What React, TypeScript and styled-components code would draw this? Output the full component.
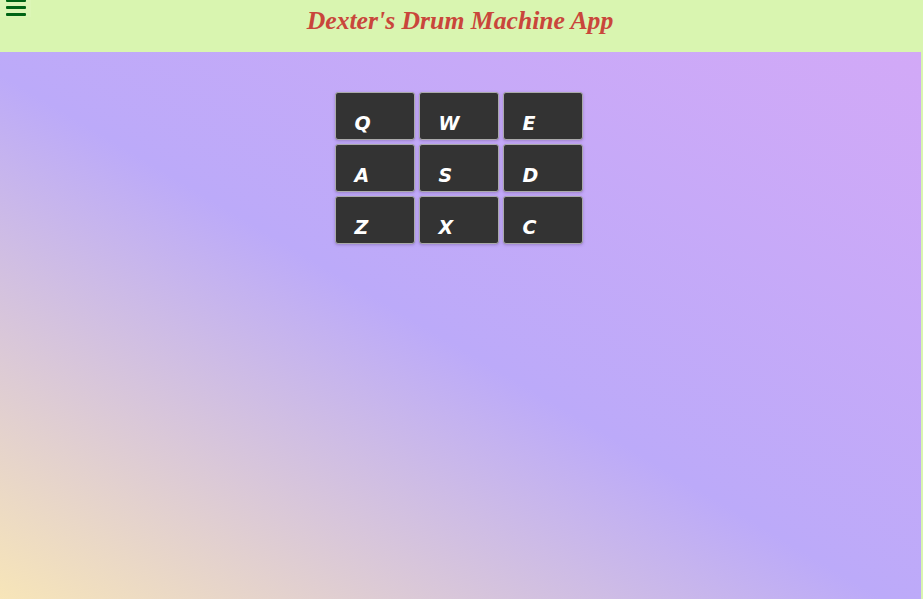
import React from "react";
import styled, { createGlobalStyle } from "styled-components";

const Global = createGlobalStyle`
  html, body { margin: 0; padding: 0; background: #d9f5b0; }
  body { font-family: "Liberation Serif", serif; overflow: hidden; }
`;

const Page = styled.div`
  display: flex;
  flex-direction: column;
  width: 923px;
  height: 599px;
`;

const Header = styled.header`
  position: relative;
  height: 52px;
  flex: none;
  display: flex;
  justify-content: center;
  background: #d9f5b0;
`;

const Menu = styled.button`
  position: absolute;
  left: 0;
  top: 0;
  width: 31px;
  height: 18px;
  padding: 0;
  border: none;
  background: #dcf6b6;
  display: flex;
  flex-direction: column;
  align-items: center;
  gap: 4px;
  margin-top: -1px;
`;

const Bar = styled.span`
  display: block;
  width: 20px;
  height: 3px;
  border-radius: 1px;
  background: #006414;
`;

const Title = styled.h1`
  margin: 0 0 0 -3px;
  padding-top: 6px;
  font-family: "Liberation Serif", serif;
  font-style: italic;
  font-weight: bold;
  font-size: 25.7px;
  color: #c9463b;
`;

const Main = styled.main`
  flex: 1;
  width: 921px;
  background: linear-gradient(to top right, #f7e5b8 0%, #bcaaf9 48%, #d2a9f7 100%);
  display: flex;
  justify-content: center;
  padding-top: 40px;
  box-sizing: border-box;
`;

const Grid = styled.div`
  display: grid;
  grid-template-columns: repeat(3, 80px);
  grid-auto-rows: 48px;
  gap: 4px;
  align-self: flex-start;
  margin-left: -4px;
`;

const Pad = styled.button`
  box-sizing: border-box;
  background: #333333;
  border: 1px solid #aaaaaa;
  border-radius: 3px;
  box-shadow: 0 1px 3px rgba(80, 50, 120, 0.35);
  color: #ffffff;
  font-family: "DejaVu Sans", sans-serif;
  font-weight: bold;
  font-style: oblique;
  font-size: 19px;
  text-align: left;
  padding: 14px 0 0 19px;
  cursor: pointer;
`;

const keys = ["Q", "W", "E", "A", "S", "D", "Z", "X", "C"];

export default function App() {
  return (
    <>
      <Global />
      <Page>
        <Header>
          <Menu aria-label="menu">
            <Bar />
            <Bar />
            <Bar />
          </Menu>
          <Title>Dexter's Drum Machine App</Title>
        </Header>
        <Main>
          <Grid>
            {keys.map((k) => (
              <Pad key={k}>{k}</Pad>
            ))}
          </Grid>
        </Main>
      </Page>
    </>
  );
}
